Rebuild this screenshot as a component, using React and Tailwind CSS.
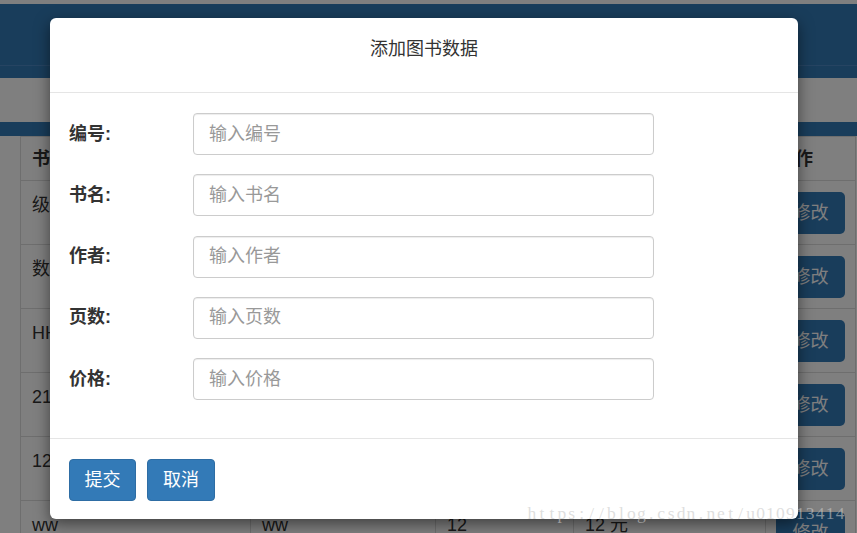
import React from "react";

const FONT = { fontFamily: '"Liberation Sans", "Noto Sans CJK SC", sans-serif' };

const rows = [
  ["级别分类", "张三", "120", "35 元"],
  ["数据结构", "李四", "300", "48 元"],
  ["HHH", "HH", "100", "20 元"],
  ["2121", "21", "21", "21 元"],
  ["1212", "12", "12", "12 元"],
  ["ww", "ww", "12", "12 元"],
];

const fields = [
  ["编号:", "输入编号"],
  ["书名:", "输入书名"],
  ["作者:", "输入作者"],
  ["页数:", "输入页数"],
  ["价格:", "输入价格"],
];

const WATERMARK = "https://blog.csdn.net/u010913414";

export default function App() {
  return (
    <div
      className="relative w-[857px] h-[533px] overflow-hidden bg-white text-[#333]"
      style={FONT}
    >
      {/* page underneath */}
      <div className="h-[4px] bg-white" />
      <div className="h-[62px] bg-[#337ab7] border-b border-[#4d88c4]" />
      <div className="h-[12px] bg-[#337ab7]" />
      <div className="h-[44px] bg-white" />
      <div className="h-[14px] bg-[#337ab7]" />
      <div className="pl-[20px]">
        <table className="border-collapse text-[18px] leading-[26px]">
          <colgroup>
            <col className="w-[230px]" />
            <col className="w-[185px]" />
            <col className="w-[138px]" />
            <col className="w-[192px]" />
            <col className="w-[89px]" />
          </colgroup>
          <thead>
            <tr className="h-[44px]">
              <th className="border border-[#ddd] px-[11px] text-left font-bold">书名</th>
              <th className="border border-[#ddd] px-[11px] text-left font-bold">作者</th>
              <th className="border border-[#ddd] px-[11px] text-left font-bold">页数</th>
              <th className="border border-[#ddd] px-[11px] text-left font-bold">价格</th>
              <th className="border border-[#ddd] px-[11px] text-left font-bold">操作</th>
            </tr>
          </thead>
          <tbody>
            {rows.map((r, i) => (
              <tr key={i} className="h-[64px]">
                {r.map((c, j) => (
                  <td key={j} className="border border-[#ddd] px-[11px] pt-[11px] align-top">
                    {c}
                  </td>
                ))}
                <td className="border border-[#ddd] px-[10px] pt-[11px] align-top">
                  <div className="w-[69px] h-[42px] rounded-[5px] bg-[#337ab7] text-white flex items-center justify-center">
                    修改
                  </div>
                </td>
              </tr>
            ))}
          </tbody>
        </table>
      </div>

      {/* backdrop */}
      <div className="absolute inset-0 bg-black/50" />

      {/* modal */}
      <div className="absolute left-[50px] top-[18px] w-[748px] h-[501px] bg-white rounded-[6px] shadow-[0_5px_15px_rgba(0,0,0,0.5)] flex flex-col">
        <div className="h-[75px] border-b border-[#e5e5e5] pt-[18px] text-center text-[18px] leading-[26px] text-[#333]">
          添加图书数据
        </div>
        <div className="flex flex-col gap-[19.25px] pl-[19px] pt-[20px] pb-[38px]">
          {fields.map(([label, ph]) => (
            <div key={label} className="flex items-center">
              <div className="w-[124px] text-[18px] font-bold text-[#333]">{label}</div>
              <div className="w-[461px] h-[42px] rounded-[4px] border border-[#ccc] shadow-[inset_0_1px_1px_rgba(0,0,0,0.075)] flex items-center pl-[15px] text-[18px] text-[#999]">
                {ph}
              </div>
            </div>
          ))}
        </div>
        <div className="flex-1 border-t border-[#e5e5e5] flex items-start gap-[11px] pl-[19px] pt-[20px]">
          <div className="w-[67px] h-[42px] rounded-[4px] bg-[#337ab7] border border-[#2e6da4] text-white text-[18px] flex items-center justify-center">
            提交
          </div>
          <div className="w-[68px] h-[42px] rounded-[4px] bg-[#337ab7] border border-[#2e6da4] text-white text-[18px] flex items-center justify-center">
            取消
          </div>
        </div>
      </div>

      {/* watermark */}
      <div
        className="absolute left-[527px] top-[501px] flex text-[17.5px] leading-[24px] text-[rgba(200,200,200,0.6)] whitespace-nowrap"
        style={{ fontFamily: '"Liberation Serif", "DejaVu Serif", serif' }}
      >
        {WATERMARK.split("").map((ch, i) => (
          <span key={i} className="w-[9.94px] text-center">
            {ch}
          </span>
        ))}
      </div>
    </div>
  );
}
